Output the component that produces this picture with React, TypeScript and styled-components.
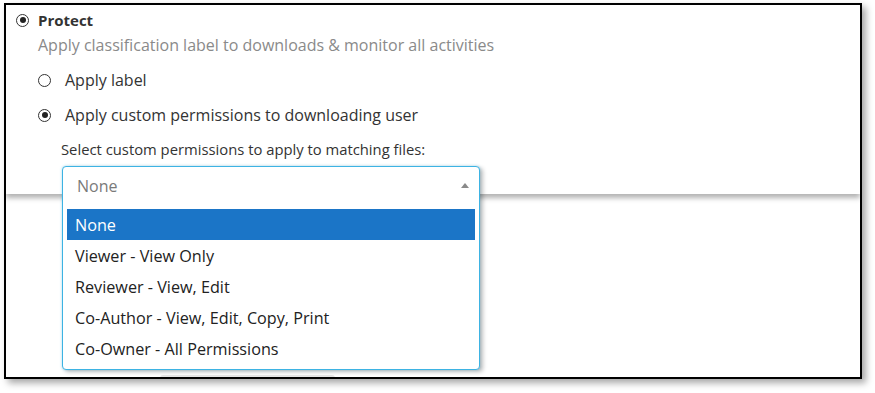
import React from "react";
import styled, { createGlobalStyle } from "styled-components";

const GlobalStyle = createGlobalStyle`
  html, body {
    margin: 0;
    padding: 0;
    background: #ffffff;
  }
  body {
    font-family: "Open Sans", "Noto Sans", Arial, sans-serif;
    color: #333333;
  }
`;

const Page = styled.div`
  width: 875px;
  height: 393px;
  padding: 3px 0 0 4px;
  box-sizing: border-box;
  background: #ffffff;
`;

const Frame = styled.div`
  width: 858px;
  height: 376px;
  box-sizing: border-box;
  border: 2.5px solid #000000;
  box-shadow: 4px 4px 7px rgba(0, 0, 0, 0.35);
  overflow: hidden;
  display: flex;
  flex-direction: column;
  background: #ffffff;
`;

const TopPanel = styled.div`
  position: relative;
  z-index: 2;
  height: 189px;
  flex-shrink: 0;
  padding: 5px 0 0 10px;
  box-sizing: border-box;
  background: #ffffff;
  box-shadow: 0 4px 5px rgba(0, 0, 0, 0.3);
`;

const OptionRow = styled.div<{ $indent?: number; $gap?: number; $spacing?: number }>`
  display: flex;
  align-items: center;
  height: 20px;
  margin-left: ${(p) => p.$indent ?? 0}px;
  margin-top: ${(p) => p.$gap ?? 0}px;
  gap: ${(p) => p.$spacing ?? 9}px;
`;

const Radio = styled.span<{ $checked?: boolean }>`
  width: 13px;
  height: 13px;
  box-sizing: border-box;
  border-radius: 50%;
  border: 1.5px solid #333333;
  display: inline-flex;
  align-items: center;
  justify-content: center;
  flex-shrink: 0;
  &::after {
    content: "";
    width: 6px;
    height: 6px;
    border-radius: 50%;
    background: #222222;
    display: ${(p) => (p.$checked ? "block" : "none")};
  }
`;

const OptionLabel = styled.span<{ $bold?: boolean }>`
  font-size: ${(p) => (p.$bold ? 15 : 16)}px;
  font-weight: ${(p) => (p.$bold ? 700 : 400)};
  color: #333333;
  white-space: nowrap;
`;

const Hint = styled.div`
  margin: 5px 0 0 22px;
  height: 20px;
  line-height: 20px;
  font-size: 16px;
  color: #8a8a8a;
  white-space: nowrap;
`;

const FieldLabel = styled.div`
  margin: 14px 0 0 45px;
  height: 20px;
  line-height: 20px;
  font-size: 14.8px;
  color: #333333;
  white-space: nowrap;
`;

const Select = styled.div`
  margin: 7px 0 0 46px;
  width: 418px;
  box-sizing: border-box;
  border: 1.5px solid #3db3e3;
  border-radius: 4px;
  background: #ffffff;
  box-shadow: 3px 2px 4px rgba(0, 0, 0, 0.25), 0 0 3px rgba(61, 179, 227, 0.4);
`;

const SelectValue = styled.div`
  height: 38px;
  display: flex;
  align-items: center;
  justify-content: space-between;
  padding: 0 10px 0 14px;
  font-size: 16px;
  color: #7a7a7a;
`;

const Caret = styled.span`
  width: 0;
  height: 0;
  border-left: 4px solid transparent;
  border-right: 4px solid transparent;
  border-bottom: 5px solid #8a8a8a;
  margin-top: -2px;
`;

const OptionList = styled.ul`
  list-style: none;
  margin: 0;
  padding: 4px 4px 5px 4px;
`;

const Item = styled.li<{ $active?: boolean }>`
  height: 31px;
  display: flex;
  align-items: center;
  padding-left: 8px;
  font-size: 16.2px;
  color: ${(p) => (p.$active ? "#ffffff" : "#222222")};
  background: ${(p) => (p.$active ? "#1b75c7" : "transparent")};
  white-space: nowrap;
`;

const LowerArea = styled.div`
  position: relative;
  flex: 1;
  background: #ffffff;
  display: flex;
  align-items: flex-end;
  padding-left: 154px;
`;

const GhostButton = styled.div`
  width: 175px;
  height: 4px;
  margin-bottom: -2px;
  border-radius: 3px 3px 0 0;
  background: #e6e6e6;
`;

const permissions = [
  "None",
  "Viewer - View Only",
  "Reviewer - View, Edit",
  "Co-Author - View, Edit, Copy, Print",
  "Co-Owner - All Permissions",
];

export default function App() {
  return (
    <>
      <GlobalStyle />
      <Page>
        <Frame>
          <TopPanel>
            <OptionRow>
              <Radio $checked />
              <OptionLabel $bold>Protect</OptionLabel>
            </OptionRow>
            <Hint>Apply classification label to downloads &amp; monitor all activities</Hint>
            <OptionRow $indent={22} $gap={15} $spacing={14}>
              <Radio />
              <OptionLabel>Apply label</OptionLabel>
            </OptionRow>
            <OptionRow $indent={22} $gap={15} $spacing={14}>
              <Radio $checked />
              <OptionLabel>Apply custom permissions to downloading user</OptionLabel>
            </OptionRow>
            <FieldLabel>Select custom permissions to apply to matching files:</FieldLabel>
            <Select>
              <SelectValue>
                <span>None</span>
                <Caret />
              </SelectValue>
              <OptionList>
                {permissions.map((p, i) => (
                  <Item key={p} $active={i === 0}>
                    {p}
                  </Item>
                ))}
              </OptionList>
            </Select>
          </TopPanel>
          <LowerArea>
            <GhostButton />
          </LowerArea>
        </Frame>
      </Page>
    </>
  );
}
